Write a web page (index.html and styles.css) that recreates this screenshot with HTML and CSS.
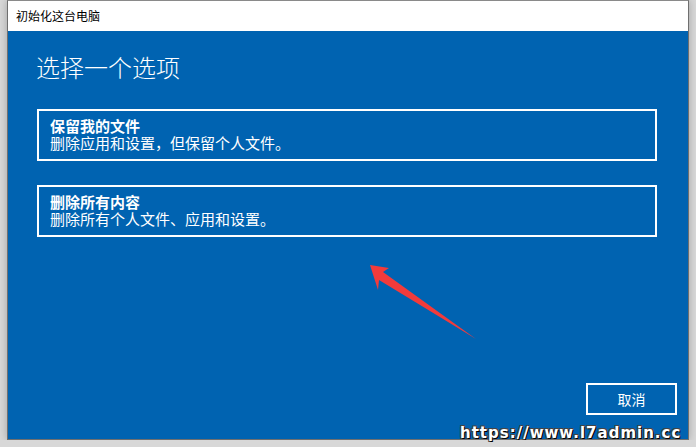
FILE: index.html
```html
<!DOCTYPE html>
<html lang="zh-CN">
<head>
    <meta charset="UTF-8">
    <title>初始化这台电脑</title>
    <link rel="stylesheet" href="styles.css">
</head>
<body>
    <div class="window">
        <div class="titlebar">初始化这台电脑</div>
        <div class="content">
            <h1>选择一个选项</h1>
            <div class="option">
                <div class="option-title">保留我的文件</div>
                <div class="option-desc">删除应用和设置，但保留个人文件。</div>
            </div>
            <div class="option">
                <div class="option-title">删除所有内容</div>
                <div class="option-desc">删除所有个人文件、应用和设置。</div>
            </div>
            <div class="footer">
                <button class="cancel">取消</button>
            </div>
        </div>
        <svg class="arrow" width="120" height="90" viewBox="0 0 120 90">
            <polygon points="9,5 28,8 22,12 115,79 18,20 17,30" fill="#f23b3b"/>
        </svg>
    </div>
    <div class="watermark">https://www.l7admin.cc</div>
</body>
</html>
```

FILE: styles.css
```css
body {
    margin: 0;
    background: #d8d8d8;
    font-family: "Noto Sans CJK SC", "Noto Sans", sans-serif;
    overflow: hidden;
}
.window {
    position: relative;
    margin-left: 7px;
    width: 680px;
    height: 438px;
    border: 1px solid #6f6f6f;
    border-top-color: #8a8a8a;
    background: #0063b1;
    box-shadow: 0 0 8px rgba(0, 0, 0, 0.25);
    display: flex;
    flex-direction: column;
}
.titlebar {
    height: 30px;
    line-height: 30px;
    padding-left: 8px;
    background: #fff;
    color: #000;
    font-size: 12px;
}
.content {
    flex: 1;
    display: flex;
    flex-direction: column;
    padding: 20px 31px 24px 29px;
    color: #fff;
}
h1 {
    margin: 0 0 26px -1px;
    font-size: 24px;
    font-weight: 300;
    line-height: 32px;
}
.option {
    border: 2px solid #fff;
    padding: 6px 11px 8px;
    margin-bottom: 24px;
}
.option-title {
    font-size: 15px;
    font-weight: bold;
    line-height: 17px;
}
.option-desc {
    font-size: 15px;
    line-height: 17px;
}
.footer {
    margin-top: auto;
    margin-right: -20px;
    display: flex;
    justify-content: flex-end;
}
.cancel {
    width: 91px;
    height: 32px;
    background: transparent;
    border: 2px solid #fff;
    color: #fff;
    font-family: "Noto Sans CJK SC", sans-serif;
    font-size: 14px;
    padding: 0;
}
.arrow {
    position: absolute;
    left: 353px;
    top: 259px;
}
.watermark {
    position: absolute;
    left: 460px;
    top: 424px;
    font-family: "DejaVu Sans", sans-serif;
    font-weight: bold;
    font-size: 15px;
    letter-spacing: 1px;
    color: #fff;
    white-space: nowrap;
    text-shadow: 1px 1px 0 #000, -1px -1px 0 #444, 1px -1px 0 #444, -1px 1px 0 #444;
}
```
